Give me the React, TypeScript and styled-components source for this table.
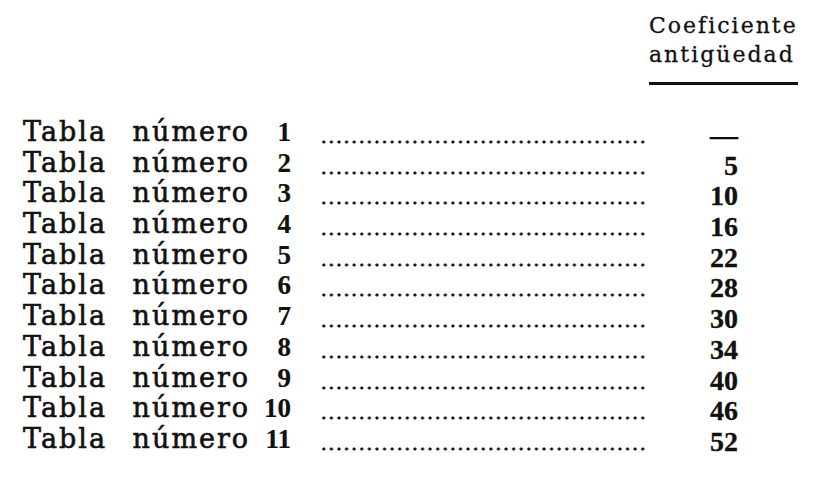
import { type FC } from 'react';
import styled, { createGlobalStyle } from 'styled-components';

const GlobalStyle = createGlobalStyle`
  html, body {
    margin: 0;
    padding: 0;
    background: #ffffff;
  }

  body {
    font-family: "DejaVu Serif", "Liberation Serif", serif;
    color: #111;
  }
`;

const Page = styled.div`
  width: 822px;
  height: 477px;
  box-sizing: border-box;
  padding: 11px 0 0 23px;
  overflow: hidden;
`;

const HeaderBlock = styled.div`
  display: grid;
  grid-template-columns: 626px 149px;
  margin-bottom: 32px;
`;

const Heading = styled.div`
  grid-column: 2;
  padding-bottom: 13px;
  border-bottom: 3px solid #111;
  font-size: 22px;
  line-height: 29px;
  letter-spacing: 2px;
  white-space: nowrap;
  -webkit-text-stroke: 0.3px #111;
`;

const Table = styled.div`
  display: grid;
  grid-template-columns: 268px 358px 148px;
  grid-auto-rows: 30.7px;
  align-items: start;
`;

const Label = styled.div`
  display: flex;
  justify-content: space-between;
  align-items: baseline;
  font-size: 27px;
  line-height: 30.7px;
  letter-spacing: 2px;
  word-spacing: 15px;
  white-space: nowrap;
  -webkit-text-stroke: 0.6px #111;
`;

const LabelNumber = styled.span`
  font-family: "Liberation Serif", serif;
  font-weight: 700;
  font-size: 27px;
  letter-spacing: 0;
  -webkit-text-stroke: 0.2px #111;
`;

const Leader = styled.div`
  height: 4px;
  margin: 23px 4px 0 29px;
  background: radial-gradient(circle, #111 1.3px, transparent 1.8px) 0 50% / 7.6px 4px repeat-x;
`;

const Value = styled.div`
  padding: 3px 59px 0 0;
  text-align: right;
  font-family: "Liberation Serif", serif;
  font-weight: 700;
  font-size: 28px;
  line-height: 30.7px;
  -webkit-text-stroke: 0.3px #111;
`;

const rows: { n: number; value: string }[] = [
  { n: 1, value: '—' },
  { n: 2, value: '5' },
  { n: 3, value: '10' },
  { n: 4, value: '16' },
  { n: 5, value: '22' },
  { n: 6, value: '28' },
  { n: 7, value: '30' },
  { n: 8, value: '34' },
  { n: 9, value: '40' },
  { n: 10, value: '46' },
  { n: 11, value: '52' },
];

const Row: FC<{ n: number; value: string }> = ({ n, value }) => (
  <>
    <Label>
      <span>Tabla número</span>
      <LabelNumber>{n}</LabelNumber>
    </Label>
    <Leader />
    <Value>{value}</Value>
  </>
);

const App: FC = () => {
  return (
    <>
      <GlobalStyle />
      <Page>
        <HeaderBlock>
          <Heading>
            Coeficiente
            <br />
            antigüedad
          </Heading>
        </HeaderBlock>
        <Table>
          {rows.map((row) => (
            <Row key={row.n} n={row.n} value={row.value} />
          ))}
        </Table>
      </Page>
    </>
  );
};

export default App;
